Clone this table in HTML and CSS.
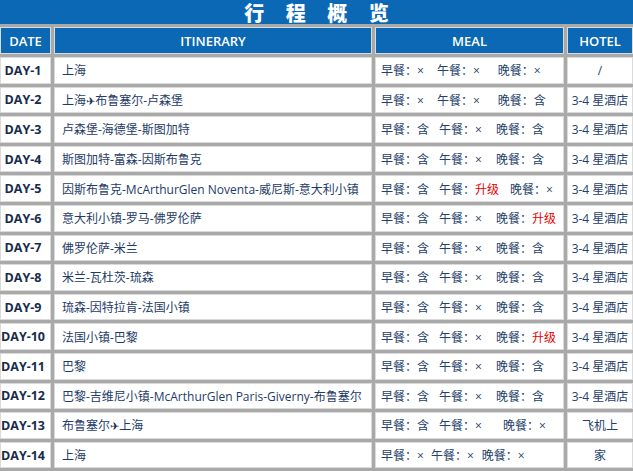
FILE: index.html
```html
<!DOCTYPE html>
<html lang="zh">
<head>
<meta charset="utf-8">
<title>行程概览</title>
<link rel="stylesheet" href="styles.css">
</head>
<body>
<div class="title">行程概览</div>
<table class="plan">
<thead>
<tr><th class="c-date">DATE</th><th class="c-itin">ITINERARY</th><th class="c-meal">MEAL</th><th class="c-hotel">HOTEL</th></tr>
</thead>
<tbody>
<tr><td class="day">DAY-1</td><td class="itin">上海</td><td class="meal"><span>早餐：×</span><span class="g13">午餐：×</span><span class="g18">晚餐：×</span></td><td class="hotel">/</td></tr>
<tr><td class="day">DAY-2</td><td class="itin">上海<span class="plane">✈</span>布鲁塞尔-卢森堡</td><td class="meal"><span>早餐：×</span><span class="g13">午餐：×</span><span class="g18">晚餐：含</span></td><td class="hotel">3-4 星酒店</td></tr>
<tr><td class="day">DAY-3</td><td class="itin">卢森堡-海德堡-斯图加特</td><td class="meal"><span>早餐：含</span><span class="g10">午餐：×</span><span class="g14">晚餐：含</span></td><td class="hotel">3-4 星酒店</td></tr>
<tr><td class="day">DAY-4</td><td class="itin">斯图加特-富森-因斯布鲁克</td><td class="meal"><span>早餐：含</span><span class="g10">午餐：×</span><span class="g14">晚餐：含</span></td><td class="hotel">3-4 星酒店</td></tr>
<tr><td class="day">DAY-5</td><td class="itin">因斯布鲁克-McArthurGlen Noventa-威尼斯-意大利小镇</td><td class="meal"><span>早餐：含</span><span class="g10">午餐：<span class="up">升级</span></span><span class="g11">晚餐：×</span></td><td class="hotel">3-4 星酒店</td></tr>
<tr><td class="day">DAY-6</td><td class="itin">意大利小镇-罗马-佛罗伦萨</td><td class="meal"><span>早餐：含</span><span class="g10">午餐：×</span><span class="g14">晚餐：<span class="up">升级</span></span></td><td class="hotel">3-4 星酒店</td></tr>
<tr><td class="day">DAY-7</td><td class="itin">佛罗伦萨-米兰</td><td class="meal"><span>早餐：含</span><span class="g10">午餐：×</span><span class="g14">晚餐：含</span></td><td class="hotel">3-4 星酒店</td></tr>
<tr><td class="day">DAY-8</td><td class="itin">米兰-瓦杜茨-琉森</td><td class="meal"><span>早餐：含</span><span class="g10">午餐：×</span><span class="g14">晚餐：含</span></td><td class="hotel">3-4 星酒店</td></tr>
<tr><td class="day">DAY-9</td><td class="itin">琉森-因特拉肯-法国小镇</td><td class="meal"><span>早餐：含</span><span class="g10">午餐：×</span><span class="g14">晚餐：含</span></td><td class="hotel">3-4 星酒店</td></tr>
<tr><td class="day">DAY-10</td><td class="itin">法国小镇-巴黎</td><td class="meal"><span>早餐：含</span><span class="g10">午餐：×</span><span class="g14">晚餐：<span class="up">升级</span></span></td><td class="hotel">3-4 星酒店</td></tr>
<tr><td class="day">DAY-11</td><td class="itin">巴黎</td><td class="meal"><span>早餐：含</span><span class="g10">午餐：×</span><span class="g14">晚餐：含</span></td><td class="hotel">3-4 星酒店</td></tr>
<tr><td class="day">DAY-12</td><td class="itin">巴黎-吉维尼小镇-McArthurGlen Paris-Giverny-布鲁塞尔</td><td class="meal"><span>早餐：含</span><span class="g10">午餐：×</span><span class="g14">晚餐：含</span></td><td class="hotel">3-4 星酒店</td></tr>
<tr><td class="day">DAY-13</td><td class="itin">布鲁塞尔<span class="plane">✈</span>上海</td><td class="meal"><span>早餐：含</span><span class="g10">午餐：×</span><span class="g21">晚餐：×</span></td><td class="hotel">飞机上</td></tr>
<tr><td class="day">DAY-14</td><td class="itin">上海</td><td class="meal"><span>早餐：×</span><span class="g7">午餐：×</span><span class="g8">晚餐：×</span></td><td class="hotel">家</td></tr>
</tbody>
</table>
</body>
</html>
```
FILE: styles.css
```css
html, body {
  margin: 0;
  padding: 0;
}
body {
  width: 633px;
  height: 471px;
  overflow: hidden;
  background: #a9a9a9;
  font-family: "Open Sans", "Noto Sans CJK SC", sans-serif;
}
.title {
  height: 24px;
  padding: 1px 0 0 21.5px;
  background: #0a68b4;
  color: #fff;
  text-align: center;
  font-family: "Noto Sans CJK SC", sans-serif;
  font-weight: 900;
  font-size: 20px;
  line-height: 24px;
  letter-spacing: 21.5px;
}
.plan {
  border-collapse: separate;
  border-spacing: 3px;
  margin: -1px 0 0 -3px;
  table-layout: fixed;
  width: 639px;
  background: #a9a9a9;
}
.plan th,
.plan td {
  box-sizing: border-box;
  border: 1px solid #dadada;
  padding: 0;
  vertical-align: middle;
  white-space: nowrap;
  overflow: hidden;
}
.plan thead tr {
  height: 27px;
}
.plan tbody tr {
  height: 26.6px;
}
.plan th {
  background: #0a68b4;
  color: #fff;
  font-weight: 600;
  font-size: 13px;
  text-align: center;
}
.c-date { width: 51px; }
.c-itin { width: 318px; }
.c-meal { width: 189px; }
.c-hotel { width: 66px; }
.plan td {
  background: #fff;
}
.day {
  text-align: center;
  font-weight: 700;
  font-size: 12.5px;
  color: #172c4b;
  padding-right: 5px !important;
}
.itin {
  padding-left: 7px !important;
  font-size: 12px;
  color: #1e3b66;
}
.plane {
  font-family: "DejaVu Sans", sans-serif;
  font-size: 11px;
  color: #172c4b;
}
.meal {
  padding-left: 5px !important;
  font-size: 12px;
  color: #24406a;
}
.hotel {
  text-align: center;
  font-size: 12px;
  color: #24406a;
}
.up { color: #e60000; }
.g7 { margin-left: 7px; }
.g8 { margin-left: 8px; }
.g10 { margin-left: 10px; }
.g11 { margin-left: 11px; }
.g13 { margin-left: 13px; }
.g14 { margin-left: 14px; }
.g18 { margin-left: 18px; }
.g21 { margin-left: 21px; }
```
